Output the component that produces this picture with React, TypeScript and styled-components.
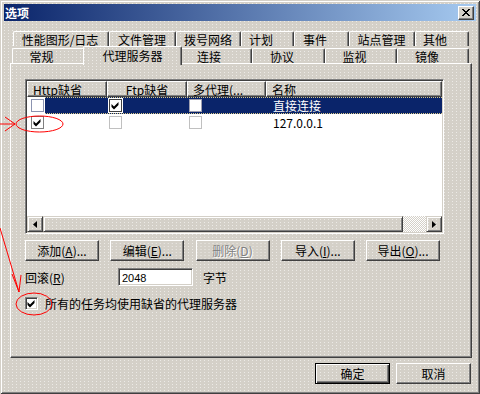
import React from 'react';
import styled, { createGlobalStyle, css } from 'styled-components';

const GlobalStyle = createGlobalStyle`
  html, body { margin: 0; padding: 0; }
  body {
    background: #d4d0c8;
    font-family: "Noto Sans CJK SC", "Liberation Sans", sans-serif;
    font-size: 12px;
    color: #000;
  }
  * { box-sizing: border-box; }
`;

// the screenshot is a gif, the grey face is speckled with light dots
const dither = css`
  background-color: #d4d0c8;
  background-image: conic-gradient(from 270deg at 1px 1px, rgba(255,255,255,0.55) 90deg, transparent 0);
  background-size: 4px 3px;
  background-attachment: fixed;
`;

const raised = css`
  border: 1px solid;
  border-color: #fff #404040 #404040 #fff;
  box-shadow: inset -1px -1px #808080;
`;

const sunken = css`
  border: 1px solid;
  border-color: #808080 #fff #fff #808080;
  box-shadow: inset 1px 1px #404040, inset -1px -1px #d4d0c8;
`;

const Window = styled.div`
  position: relative;
  width: 480px;
  height: 394px;
  padding: 4px;
  display: flex;
  flex-direction: column;
  overflow: hidden;
  ${dither}
  box-shadow: inset 1px 1px #d4d0c8, inset -1px -1px #404040, inset 2px 2px #fff, inset -2px -2px #808080;
`;

const TitleBar = styled.div`
  flex: none;
  height: 17px;
  display: flex;
  align-items: center;
  justify-content: space-between;
  padding: 0 2px 0 1px;
  background: linear-gradient(90deg, #0a246a, #a6caf0);
  color: #fff;
  font-weight: bold;
  line-height: 14px;
`;

const CloseButton = styled.div`
  width: 16px;
  height: 14px;
  display: flex;
  align-items: center;
  justify-content: center;
  background: #d4d0c8;
  ${raised}
`;

const TabStrip = styled.div`
  flex: none;
  margin-top: 10px;
  display: flex;
  flex-direction: column;
`;

const TabRow = styled.div<{ $indent: number; $front?: boolean }>`
  display: flex;
  align-items: flex-end;
  height: ${p => (p.$front ? 17 : 15)}px;
  margin-left: ${p => p.$indent}px;
`;

const Tab = styled.div<{ $w: number; $shift: number; $active?: boolean }>`
  ${dither}
  flex: none;
  width: ${p => p.$w}px;
  height: 15px;
  display: flex;
  align-items: center;
  justify-content: center;
  padding-right: ${p => p.$shift}px;
  border-top: 1px solid #fff;
  border-left: 1px solid #fff;
  border-right: 1px solid #404040;
  box-shadow: inset -1px 0 #808080;
  border-radius: 2px 2px 0 0;
  line-height: 13px;
  white-space: nowrap;
  ${p =>
    p.$active &&
    css`
      position: relative;
      z-index: 1;
      height: 19px;
      margin: 0 -2px -2px;
      padding-bottom: 2px;
    `}
`;

const Pane = styled.div`
  ${dither}
  flex: none;
  height: 295px;
  margin: 0 4px 0 6px;
  padding: 15px 0 0 14px;
  display: flex;
  flex-direction: column;
  ${raised}
`;

const ListView = styled.div`
  flex: none;
  width: 419px;
  height: 155px;
  padding: 1px;
  background: #fff;
  display: flex;
  flex-direction: column;
  ${sunken}
`;

const HeaderRow = styled.div`
  display: flex;
  height: 16px;
  flex: none;
`;

const HeaderCell = styled.div<{ $w?: number; $center?: boolean }>`
  ${dither}
  ${raised}
  ${p => (p.$w ? `width: ${p.$w}px; flex: none;` : 'flex: 1;')}
  display: flex;
  align-items: center;
  justify-content: ${p => (p.$center ? 'center' : 'flex-start')};
  padding: 0 5px;
  line-height: 13px;
  white-space: nowrap;
  overflow: hidden;
`;

const Row = styled.div`
  display: flex;
  height: 17px;
  flex: none;
`;

const StateCell = styled.div`
  width: 18px;
  flex: none;
  display: flex;
  align-items: center;
  padding-left: 4px;
`;

const Band = styled.div<{ $selected?: boolean }>`
  flex: 1;
  display: flex;
  align-items: center;
  border-top: 1px solid transparent;
  border-bottom: 1px solid transparent;
  ${p =>
    p.$selected &&
    css`
      background: #0a246a;
      color: #fff;
      border-top: 1px dotted #d8c888;
      border-bottom: 1px dotted #d8c888;
    `}
`;

const SubCell = styled.div<{ $w?: number; $pad: number }>`
  ${p => (p.$w ? `width: ${p.$w}px; flex: none;` : 'flex: 1;')}
  display: flex;
  align-items: center;
  padding-left: ${p => p.$pad}px;
  line-height: 13px;
  white-space: nowrap;
`;

const ListCheck = styled.span<{ $edge: string; $ring?: boolean }>`
  width: 13px;
  height: 13px;
  flex: none;
  display: inline-flex;
  background: #fff;
  border: 1px solid ${p => p.$edge};
  ${p => p.$ring && 'outline: 1px solid #fff;'}
`;

const HScroll = styled.div`
  margin-top: auto;
  display: flex;
  height: 16px;
  flex: none;
`;

const ScrollButton = styled.div`
  ${dither}
  width: 16px;
  height: 16px;
  flex: none;
  display: flex;
  align-items: center;
  justify-content: center;
  border: 1px solid;
  border-color: #d4d0c8 #404040 #404040 #d4d0c8;
  box-shadow: inset 1px 1px #fff, inset -1px -1px #808080;
`;

const Thumb = styled(ScrollButton)<{ $w: number }>`
  width: ${p => p.$w}px;
`;

const Track = styled.div`
  flex: 1;
  background: repeating-conic-gradient(#fff 0 25%, #d4d0c8 0 50%) 0 0 / 2px 2px;
`;

const ButtonRow = styled.div`
  margin-top: 6px;
  width: 415px;
  display: flex;
  justify-content: space-between;
`;

const Button = styled.div<{ $w: number; $default?: boolean; $disabled?: boolean }>`
  ${dither}
  width: ${p => p.$w}px;
  height: 21px;
  flex: none;
  display: flex;
  align-items: center;
  justify-content: center;
  line-height: 13px;
  white-space: nowrap;
  ${raised}
  ${p =>
    p.$default &&
    css`
      border: 1px solid #000;
      box-shadow: inset 1px 1px #fff, inset -1px -1px #404040, inset -2px -2px #808080;
    `}
  ${p =>
    p.$disabled &&
    css`
      color: #808080;
      text-shadow: 1px 1px #fff;
    `}
`;

const SettingRow = styled.div`
  margin-top: 7px;
  height: 18px;
  display: flex;
  align-items: center;
`;

const Label = styled.span`
  width: 93px;
  flex: none;
  line-height: 13px;
`;

const NumberBox = styled.div`
  width: 75px;
  height: 18px;
  flex: none;
  background: #fff;
  padding: 1px 0 0 3px;
  display: flex;
  align-items: center;
  font-family: "Liberation Sans", sans-serif;
  font-size: 11px;
  ${sunken}
`;

const Unit = styled.span`
  margin-left: 10px;
  line-height: 13px;
`;

const CheckRow = styled.div`
  margin-top: 11px;
  display: flex;
  align-items: center;
  gap: 7px;
  line-height: 13px;
`;

const CheckBox = styled.span`
  width: 13px;
  height: 13px;
  flex: none;
  display: inline-flex;
  background: #fff;
  ${sunken}
`;

const Footer = styled.div`
  margin-top: 5px;
  padding-right: 5px;
  display: flex;
  justify-content: flex-end;
  gap: 6px;
`;

const Marks = styled.svg`
  position: absolute;
  left: 0;
  top: 0;
  pointer-events: none;
  z-index: 5;
`;

function CheckMark({ inset = 0 }: { inset?: number }) {
  return (
    <svg width="11" height="11" viewBox="0 0 11 11" style={{ marginLeft: inset, marginTop: inset }}>
      <polygon points="1.5,4 4,6.5 8.5,2 8.5,5 4,9.5 1.5,7" fill="#000" />
    </svg>
  );
}

const crossRows = ['11000011', '01100110', '00111100', '00011000', '00111100', '01100110', '11000011'];

function CloseGlyph() {
  return (
    <svg width="8" height="7" viewBox="0 0 8 7" shapeRendering="crispEdges">
      {crossRows.flatMap((r, y) =>
        r.split('').map((c, x) => (c === '1' ? <rect key={`${x}-${y}`} x={x} y={y} width="1" height="1" fill="#000" /> : null))
      )}
    </svg>
  );
}

function Arrow({ dir }: { dir: 'left' | 'right' }) {
  return (
    <svg width="4" height="7" viewBox="0 0 4 7">
      <polygon points={dir === 'left' ? '4,0 4,7 0,3.5' : '0,0 0,7 4,3.5'} fill="#000" />
    </svg>
  );
}

const backTabs: [string, number, number][] = [
  ['性能图形/日志', 96, 2],
  ['文件管理', 67, 1],
  ['拨号网络', 65, 1],
  ['计划', 53, 13],
  ['事件', 55, 13],
  ['站点管理', 66, 1],
  ['其他', 54, 14],
];

const frontTabs: [string, number, number][] = [
  ['常规', 73, 14],
  ['代理服务器', 99, 0],
  ['连接', 72, 14],
  ['协议', 73, 13],
  ['监视', 72, 13],
  ['镜像', 72, 12],
];

type Proxy = { http: boolean; ftp: boolean; multi: boolean; name: string; selected?: boolean };

const proxies: Proxy[] = [
  { http: false, ftp: true, multi: false, name: '直接连接', selected: true },
  { http: true, ftp: false, multi: false, name: '127.0.0.1' },
];

export default function App() {
  return (
    <>
      <GlobalStyle />
      <Window>
        <TitleBar>
          <span>选项</span>
          <CloseButton>
            <CloseGlyph />
          </CloseButton>
        </TitleBar>

        <TabStrip>
          <TabRow $indent={9}>
            {backTabs.map(([t, w, s]) => (
              <Tab key={t} $w={w} $shift={s}>
                {t}
              </Tab>
            ))}
          </TabRow>
          <TabRow $indent={8} $front>
            {frontTabs.map(([t, w, s]) => (
              <Tab key={t} $w={w} $shift={s} $active={t === '代理服务器'}>
                {t}
              </Tab>
            ))}
          </TabRow>
        </TabStrip>

        <Pane>
          <ListView>
            <HeaderRow>
              <HeaderCell $w={80}>Http缺省</HeaderCell>
              <HeaderCell $w={80} $center>
                Ftp缺省
              </HeaderCell>
              <HeaderCell $w={79}>多代理(...</HeaderCell>
              <HeaderCell>名称</HeaderCell>
            </HeaderRow>
            {proxies.map(p => (
              <Row key={p.name}>
                <StateCell>
                  <ListCheck $edge={p.http ? '#808080' : '#8c94b0'}>{p.http && <CheckMark />}</ListCheck>
                </StateCell>
                <Band $selected={p.selected}>
                  <SubCell $w={62} $pad={0} />
                  <SubCell $w={80} $pad={2}>
                    <ListCheck $edge={p.selected ? '#404040' : '#c0c0c0'} $ring={p.selected}>
                      {p.ftp && <CheckMark />}
                    </ListCheck>
                  </SubCell>
                  <SubCell $w={79} $pad={2}>
                    <ListCheck $edge={p.selected ? '#a0a0b0' : '#c0c0c0'}>{p.multi && <CheckMark />}</ListCheck>
                  </SubCell>
                  <SubCell $pad={7}>{p.name}</SubCell>
                </Band>
              </Row>
            ))}
            <HScroll>
              <ScrollButton>
                <Arrow dir="left" />
              </ScrollButton>
              <Thumb $w={360} />
              <Track />
              <ScrollButton>
                <Arrow dir="right" />
              </ScrollButton>
            </HScroll>
          </ListView>

          <ButtonRow>
            <Button $w={74}>
              添加(<u>A</u>)...
            </Button>
            <Button $w={74}>
              编辑(<u>E</u>)...
            </Button>
            <Button $w={74} $disabled>
              删除(<u>D</u>)
            </Button>
            <Button $w={74}>
              导入(<u>I</u>)...
            </Button>
            <Button $w={74}>
              导出(<u>O</u>)...
            </Button>
          </ButtonRow>

          <SettingRow>
            <Label>
              回滚(<u>R</u>)
            </Label>
            <NumberBox>2048</NumberBox>
            <Unit>字节</Unit>
          </SettingRow>

          <CheckRow>
            <CheckBox>
              <CheckMark />
            </CheckBox>
            <span>所有的任务均使用缺省的代理服务器</span>
          </CheckRow>
        </Pane>

        <Footer>
          <Button $w={75} $default>
            确定
          </Button>
          <Button $w={75}>取消</Button>
        </Footer>

        <Marks width="480" height="394" viewBox="0 0 480 394" fill="none" stroke="#ff0000" strokeWidth="1">
          <line x1="0" y1="124" x2="15" y2="124" />
          <polyline points="5,117 15,124 5,131" />
          <ellipse cx="39.5" cy="124" rx="23.5" ry="8" />
          <line x1="0" y1="228" x2="19" y2="292" />
          <polyline points="12,274 19,292 21,275" />
          <ellipse cx="34" cy="304" rx="18" ry="11" />
        </Marks>
      </Window>
    </>
  );
}
